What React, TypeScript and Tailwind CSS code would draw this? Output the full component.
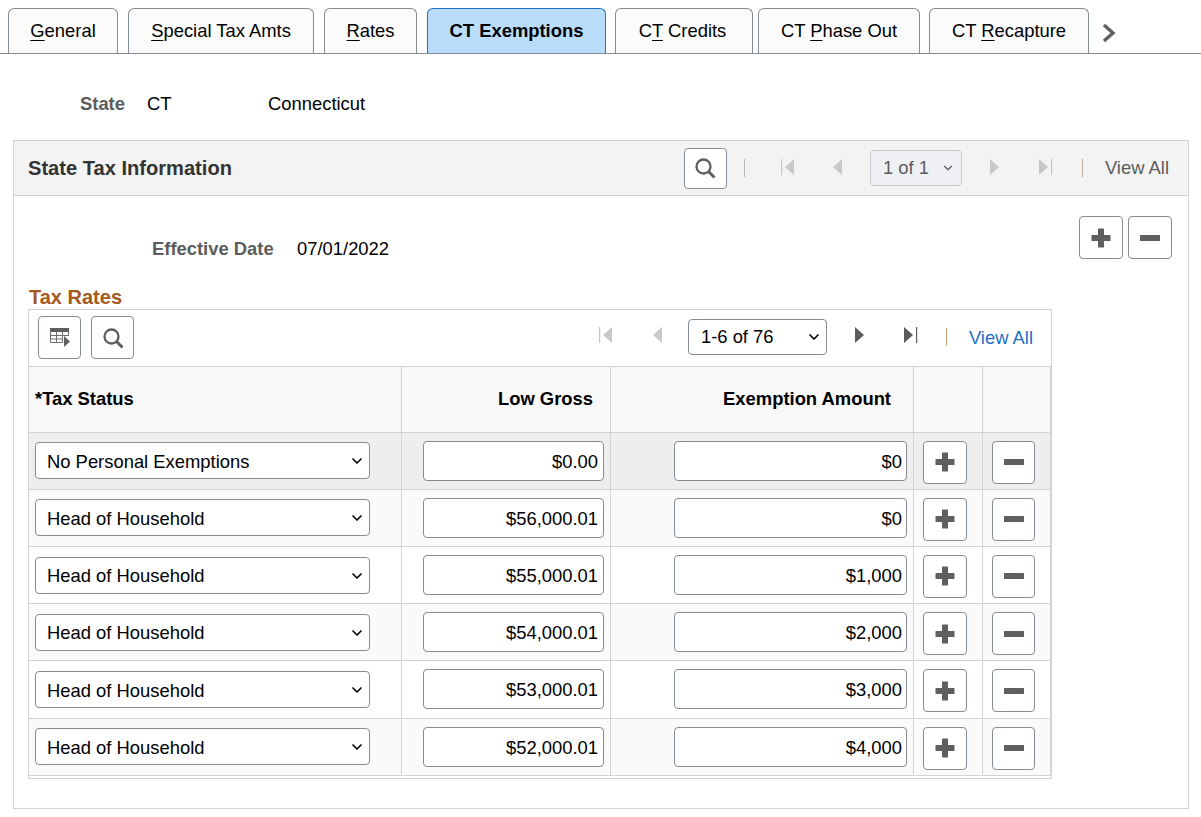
import { ChevronDown } from 'lucide-react';

const TABS = [
  { before: '', key: 'G', after: 'eneral', cls: 'w-[110px]' },
  { before: '', key: 'S', after: 'pecial Tax Amts', cls: 'ml-[10px] w-[186px]' },
  { before: '', key: 'R', after: 'ates', cls: 'ml-[10px] w-[93px]' },
  { before: 'CT Exemptions', key: '', after: '', cls: 'ml-[10px] w-[179px]', active: true },
  { before: 'C', key: 'T', after: ' Credits', cls: 'ml-[9px] w-[138px] pr-[3px]' },
  { before: 'CT ', key: 'P', after: 'hase Out', cls: 'ml-[5px] w-[162px]' },
  { before: 'CT ', key: 'R', after: 'ecapture', cls: 'ml-[9px] w-[160px]' },
];

const ROWS = [
  { status: 'No Personal Exemptions', gross: '$0.00', amount: '$0' },
  { status: 'Head of Household', gross: '$56,000.01', amount: '$0' },
  { status: 'Head of Household', gross: '$55,000.01', amount: '$1,000' },
  { status: 'Head of Household', gross: '$54,000.01', amount: '$2,000' },
  { status: 'Head of Household', gross: '$53,000.01', amount: '$3,000' },
  { status: 'Head of Household', gross: '$52,000.01', amount: '$4,000' },
];

const ROW_BG = ['bg-[#eeeeee]', 'bg-[#fafafa]', 'bg-white', 'bg-[#fafafa]', 'bg-white', 'bg-[#fafafa]'];

function SearchIcon() {
  return (
    <svg width="22" height="22" viewBox="0 0 22 22" fill="none" stroke="#5f5f5f">
      <circle cx="9.5" cy="9.5" r="7" strokeWidth="2.3" />
      <path d="M14.5 14.5 L20.5 20.5" strokeWidth="3" />
    </svg>
  );
}

function PlusIcon() {
  return (
    <svg width="20" height="20" viewBox="0 0 20 20" fill="#5f5f5f">
      <path d="M7.5 0.5 h5 a0.5 0.5 0 0 1 0.5 0.5 v6 h6 a0.5 0.5 0 0 1 0.5 0.5 v5 a0.5 0.5 0 0 1 -0.5 0.5 h-6 v6 a0.5 0.5 0 0 1 -0.5 0.5 h-5 a0.5 0.5 0 0 1 -0.5 -0.5 v-6 h-6 a0.5 0.5 0 0 1 -0.5 -0.5 v-5 a0.5 0.5 0 0 1 0.5 -0.5 h6 v-6 a0.5 0.5 0 0 1 0.5 -0.5 z" />
    </svg>
  );
}

function MinusIcon() {
  return (
    <svg width="20" height="20" viewBox="0 0 20 20" fill="#5f5f5f">
      <rect x="0" y="7" width="20" height="6" rx="0.5" />
    </svg>
  );
}

function IconButton({ children, size = 'h-[43px] w-[44px]' }: { children: React.ReactNode; size?: string }) {
  return (
    <button type="button" className={`${size} flex shrink-0 items-center justify-center rounded-[4px] border border-[#868c93] bg-white`}>
      {children}
    </button>
  );
}

function Pager({ kind, on }: { kind: 'first' | 'prev' | 'next' | 'last'; on: boolean }) {
  const fill = on ? '#5c5c5c' : '#c8c8c8';
  return (
    <svg width="16" height="18" viewBox="0 0 16 18" fill={fill} className="mb-[3px]">
      {kind === 'first' && <path d="M1 1 h1.2 v16 H1 z M14 1 v16 L5 9 z" />}
      {kind === 'prev' && <path d="M12 1 v16 L3 9 z" />}
      {kind === 'next' && <path d="M4 1 v16 L13 9 z" />}
      {kind === 'last' && <path d="M14 1 h1.2 v16 H14 z M2 1 v16 L11 9 z" />}
    </svg>
  );
}

function Divider({ color }: { color: string }) {
  return <div className={`h-[18px] w-px ${color}`} />;
}

function StatusSelect({ value }: { value: string }) {
  return (
    <div className="relative h-[37px] w-[335px]">
      <select
        value={value}
        onChange={() => {}}
        className="h-full w-full appearance-none rounded-[4px] border border-[#868c93] bg-white pl-[11px] pt-[2px] text-[18.4px] text-black"
      >
        <option>{value}</option>
      </select>
      <ChevronDown size={16} strokeWidth={2.5} className="pointer-events-none absolute right-[5px] top-[11px] text-black" />
    </div>
  );
}

function MoneyInput({ value, cls }: { value: string; cls: string }) {
  return (
    <input
      readOnly
      value={value}
      className={`h-[40px] ${cls} rounded-[4px] border border-[#868c93] bg-white pt-[2px] text-right text-[18.4px] text-black`}
    />
  );
}

export default function App() {
  return (
    <div className="h-[817px] w-[1201px] overflow-hidden bg-white font-['Liberation_Sans',Arial,sans-serif] text-[18.4px] text-black">
      <div className="flex h-[54px] items-end border-b border-[#868c93] pl-[8px]">
        {TABS.map(tab => (
          <div
            key={tab.before + tab.key}
            className={`flex h-[45px] ${tab.cls} items-center justify-center rounded-t-[6px] border border-b-0 ${tab.active ? 'border-[#1f6fc4] bg-[#b9dcfb] font-bold' : 'border-[#868c93] bg-[#fbfbfb]'}`}
          >
            <span className="whitespace-pre">
              {tab.before}
              {tab.key && <span className="underline underline-offset-[3px]">{tab.key}</span>}
              {tab.after}
            </span>
          </div>
        ))}
        <svg width="14" height="20" viewBox="0 0 14 20" fill="none" stroke="#5f5f5f" strokeWidth="3.4" className="mb-[10px] ml-[13px]">
          <path d="M2 2 L11 10 L2 18" />
        </svg>
      </div>

      <div className="flex h-[86px] items-center pt-[14px]">
        <span className="ml-[80px] w-[67px] font-bold text-[#5c5c5c]">State</span>
        <span className="w-[121px]">CT</span>
        <span>Connecticut</span>
      </div>

      <section className="ml-[13px] h-[669px] w-[1176px] border border-[#d0d3d8]">
        <div className="flex h-[55px] items-center border-b border-[#d0d3d8] bg-[#f3f3f3] pl-[14px]">
          <h2 className="text-[20.1px] font-bold text-[#333333]">State Tax Information</h2>
          <div className="ml-auto flex items-center pr-[19px]">
            <IconButton size="h-[41px] w-[43px]"><SearchIcon /></IconButton>
            <div className="ml-[17px]"><Divider color="bg-[#b9b9b9]" /></div>
            <div className="ml-[35px] flex"><Pager kind="first" on={false} /></div>
            <div className="ml-[34px] flex"><Pager kind="prev" on={false} /></div>
            <div className="ml-[24px] flex h-[36px] w-[92px] items-center justify-between rounded-[4px] border border-[#c8ccd2] bg-[#eef0f4] pl-[12px] pr-[6px] text-[#5c5c5c]">
              1 of 1
              <ChevronDown size={14} strokeWidth={2} />
            </div>
            <div className="ml-[24px] flex"><Pager kind="next" on={false} /></div>
            <div className="ml-[35px] flex"><Pager kind="last" on={false} /></div>
            <div className="ml-[29px]"><Divider color="bg-[#bfa892]" /></div>
            <span className="ml-[22px] text-[#5c5c5c]">View All</span>
          </div>
        </div>

        <div className="flex justify-between pl-[138px] pr-[16px] pt-[20px]">
          <div className="flex pt-[19px]">
            <span className="w-[145px] font-bold text-[#5c5c5c]">Effective Date</span>
            <span>07/01/2022</span>
          </div>
          <div className="flex gap-[5px]">
            <IconButton><PlusIcon /></IconButton>
            <IconButton><MinusIcon /></IconButton>
          </div>
        </div>

        <h3 className="ml-[15px] mt-[23px] text-[20px] font-bold leading-[23px] text-[#a5591c]">Tax Rates</h3>

        <div className="ml-[14px] w-[1024px] border border-[#d0d3d8]">
          <div className="flex h-[56px] items-center pl-[9px] pr-[18px]">
            <div className="flex gap-[10px]">
              <IconButton size="h-[43px] w-[43px]">
                <svg width="22" height="22" viewBox="0 0 22 22" fill="#5f5f5f">
                  <rect x="1" y="1" width="19" height="4" />
                  <path fill="none" stroke="#6f6f6f" strokeWidth="1" d="M1.5 5 V15.5 H13 M19.5 5 V9 M1.5 8.5 H19.5 M1.5 12 H13 M7.5 5 V15.5 M13.5 5 V15.5" />
                  <path d="M15 9 L21 14.5 L15 20 z" />
                </svg>
              </IconButton>
              <IconButton size="h-[43px] w-[43px]"><SearchIcon /></IconButton>
            </div>
            <div className="mb-[2px] ml-auto flex items-center">
              <div className="flex"><Pager kind="first" on={false} /></div>
              <div className="ml-[36px] flex"><Pager kind="prev" on={false} /></div>
              <div className="relative ml-[22px] h-[36px] w-[139px]">
                <select
                  value="1-6 of 76"
                  onChange={() => {}}
                  className="h-full w-full appearance-none rounded-[4px] border border-[#868c93] bg-white pl-[12px] text-[18.4px] text-black"
                >
                  <option>1-6 of 76</option>
                </select>
                <ChevronDown size={16} strokeWidth={2.5} className="pointer-events-none absolute right-[5px] top-[10px] text-black" />
              </div>
              <div className="ml-[24px] flex"><Pager kind="next" on /></div>
              <div className="ml-[35px] flex"><Pager kind="last" on /></div>
              <div className="ml-[28px]"><Divider color="bg-[#c9a27c]" /></div>
              <span className="ml-[22px] pt-[2px] text-[#1f6fc4]">View All</span>
            </div>
          </div>

          <div className="grid grid-cols-[373px_209px_303px_69px_68px] border-t border-[#d0d3d8] bg-[#f8f8f8] font-bold">
            <div className="flex h-[65px] items-center border-r border-[#d0d3d8] pl-[6px]">*Tax Status</div>
            <div className="flex h-[65px] items-center justify-end border-r border-[#d0d3d8] pr-[17px]">Low Gross</div>
            <div className="flex h-[65px] items-center justify-end border-r border-[#d0d3d8] pr-[22px]">Exemption Amount</div>
            <div className="h-[65px] border-r border-[#d0d3d8]" />
            <div className="h-[65px] border-r border-[#d0d3d8]" />
          </div>

          {ROWS.map((row, i) => (
            <div key={row.gross} className={`grid h-[57.2px] grid-cols-[373px_209px_303px_69px_68px] border-t border-[#d0d3d8] ${ROW_BG[i]}`}>
              <div className="flex items-center border-r border-[#d0d3d8] pl-[6px]">
                <StatusSelect value={row.status} />
              </div>
              <div className="flex items-center justify-end border-r border-[#d0d3d8] pr-[6px]">
                <MoneyInput value={row.gross} cls="w-[181px] pr-[5px]" />
              </div>
              <div className="flex items-center justify-end border-r border-[#d0d3d8] pr-[6px]">
                <MoneyInput value={row.amount} cls="w-[233px] pr-[4px]" />
              </div>
              <div className="border-r border-[#d0d3d8] pl-[9px] pt-[8px]">
                <IconButton><PlusIcon /></IconButton>
              </div>
              <div className="border-r border-[#d0d3d8] pl-[9px] pt-[8px]">
                <IconButton size="h-[43px] w-[43px]"><MinusIcon /></IconButton>
              </div>
            </div>
          ))}
          <div className="h-[3px] border-t border-[#d0d3d8] bg-white" />
        </div>
      </section>
    </div>
  );
}
